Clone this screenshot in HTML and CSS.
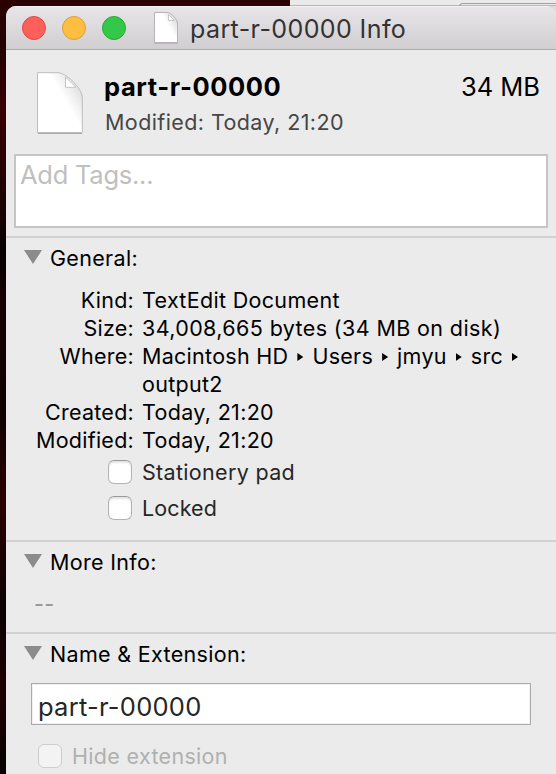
FILE: index.html
```html
<!DOCTYPE html>
<html lang="en">
<head>
<meta charset="utf-8">
<title>part-r-00000 Info</title>
<link rel="stylesheet" href="styles.css">
</head>
<body>
<svg class="defs" width="0" height="0">
  <defs>
    <linearGradient id="paper" x1=".52" y1=".34" x2=".8" y2=".12"><stop offset="0" stop-color="#fff"/><stop offset="1" stop-color="#e2e2e2"/></linearGradient>
  </defs>
</svg>
<div class="behind"><div class="behind-tab"></div></div>
<main class="window">
  <header class="titlebar">
    <div class="lights"><i class="light red"></i><i class="light yellow"></i><i class="light green"></i></div>
    <svg class="title-doc" viewBox="0 0 24 31"><path d="M.5.5H13C17 .5 23.500 7 23.500 12V30.500H.5Z" fill="url(#paper)" stroke="#b5b3b5"/><path d="M14.500 2.500V8.500H20.500Z" fill="#fff" stroke="#bdbdbd" stroke-width=".8"/></svg>
    <span class="title">part-r-00000 Info</span>
  </header>
  <section class="summary">
    <svg class="big-doc" viewBox="0 0 48 63"><path d="M2 61.500H46" stroke="#aaa" stroke-width="1"/><path d="M1.500.7H22C30 .7 46.300 16 46.300 26V60.500H1.500Z" fill="url(#paper)" stroke="#bdbdbd" stroke-width="1"/><path d="M29.500 5V15.300H40Z" fill="#fff" stroke="#c4c4c4" stroke-width="1"/></svg>
    <div class="summary-text">
      <div class="summary-line"><b class="name">part-r-00000</b><span class="size">34 MB</span></div>
      <div class="modified">Modified: Today, 21:20</div>
    </div>
  </section>
  <div class="tags">Add Tags...</div>
  <section class="panel general">
    <h2><svg class="tri" viewBox="0 0 18 14"><path d="M0 0H18L9 14Z"/></svg><span>General:</span></h2>
    <dl>
      <dt>Kind:</dt><dd>TextEdit Document</dd>
      <dt>Size:</dt><dd class="bytes">34,008,665 bytes (34 MB on disk)</dd>
      <dt>Where:</dt><dd class="where"><span>Macintosh HD</span><i class="arrow"></i><span>Users</span><i class="arrow"></i><span>jmyu</span><i class="arrow"></i><span>src</span><i class="arrow"></i><span class="break">output2</span></dd>
      <dt>Created:</dt><dd>Today, 21:20</dd>
      <dt>Modified:</dt><dd>Today, 21:20</dd>
    </dl>
    <div class="check"><i class="box"></i><span>Stationery pad</span></div>
    <div class="check"><i class="box"></i><span class="locked">Locked</span></div>
  </section>
  <section class="panel more">
    <h2><svg class="tri" viewBox="0 0 18 14"><path d="M0 0H18L9 14Z"/></svg><span>More Info:</span></h2>
    <div class="none">--</div>
  </section>
  <section class="panel extension">
    <h2><svg class="tri" viewBox="0 0 18 14"><path d="M0 0H18L9 14Z"/></svg><span>Name &amp; Extension:</span></h2>
    <div class="field">part-r-00000</div>
    <div class="check disabled"><i class="box"></i><span>Hide extension</span></div>
  </section>
</main>
</body>
</html>
```

FILE: styles.css
```css
* { box-sizing: border-box; }
body {
  margin: 0;
  width: 556px;
  height: 774px;
  overflow: hidden;
  background: linear-gradient(#2c0000 0, #240000 50px, #380000 110px, #1a0000 210px, #080000 250px, #160000 300px, #100000 420px, #2b0000 500px, #0c0000 610px, #200000 690px, #080000 774px);
  font-family: Inter, "Liberation Sans", sans-serif;
  font-size: 21.5px;
  line-height: 28px;
  letter-spacing: .32px;
  color: #000;
}
.defs { position: absolute; }
.behind { margin: 0 0 -24px 290px; height: 30px; background: linear-gradient(#eaeaea 5px, #b8b8b8 5px, #b8b8b8 6px, #dcdcdc 6px); overflow: hidden; }
.behind-tab { margin: 3px 0 0 169px; height: 27px; border: 1px solid #a0a0a0; border-right: 0; border-radius: 4px 0 0 0; }
.window { position: relative; margin-left: 6px; width: 550px; height: 768px; background: #ebebeb; border-radius: 10px 10px 0 0; overflow: hidden; }

.titlebar { height: 44px; display: flex; align-items: center; padding-left: 16px; background: linear-gradient(#e8e5e8, #d1ced1); border-top: 1px solid #f3f1f3; border-bottom: 1px solid #acaaac; }
.lights { display: flex; gap: 16px; width: 104px; }
.light { width: 24px; height: 24px; border-radius: 50%; border: 1px solid; }
.red { background: #fd605b; border-color: #df4845; }
.yellow { background: #fdbe41; border-color: #dd9f35; }
.green { background: #34c84a; border-color: #26a934; }
.title-doc { width: 24px; height: 31px; margin: -1px 0 0 28px; filter: drop-shadow(0 1px 0 #b8b6b8); }
.title { margin: 1px 0 0 12px; font-size: 25px; color: #333; white-space: nowrap; letter-spacing: .4px; }

.summary { height: 104px; display: flex; padding: 22px 16px 0 30px; }
.big-doc { width: 48px; height: 63px; flex: none; }
.summary-text { flex: 1; padding-left: 20px; }
.summary-line { display: flex; justify-content: space-between; margin-top: 1px; height: 28px; font-size: 25.5px; letter-spacing: 0; }
.name { letter-spacing: .6px; }
.modified { margin: 7px 0 0 1px; color: #464646; letter-spacing: .41px; }

.tags { margin: 0 8px 8px; height: 74px; border: 2px solid #c5c5c5; background: #fff; color: #bfbfbf; font-size: 25.5px; letter-spacing: -.25px; padding: 5px 4px; }

.panel { border-top: 2px solid #d2d2d2; }
h2 { margin: 0; height: 28px; display: flex; font-weight: 400; font-size: 21.5px; }
.tri { width: 18px; height: 14px; margin: 6px 8px 0 18px; fill: #8c8c8c; }
.general { height: 304px; padding-top: 6px; }
dl { margin: 14px 0 0; display: grid; grid-template-columns: 128px 1fr; column-gap: 8px; }
dt { text-align: right; letter-spacing: .25px; }
dd { margin: 0; white-space: nowrap; }
.bytes { letter-spacing: .38px; }
.where { display: flex; flex-wrap: wrap; align-items: center; letter-spacing: .28px; }
.break { flex-basis: 100%; }
.arrow { width: 6px; height: 8px; margin: 2px 9px 0; background: #000; clip-path: polygon(0 0, 100% 50%, 0 100%); }
.check { display: flex; align-items: center; height: 36px; padding-left: 102px; gap: 10px; color: #262626; }
.locked { letter-spacing: .1px; }
.box { width: 24px; height: 24px; background: #fff; border: 1px solid #b4b4b4; border-top-color: #999; border-radius: 6px; box-shadow: inset 0 2px 2px #e4e4e4; }
.more { height: 92px; padding-top: 6px; }
.none { margin: 14px 0 0 28px; color: #9a9a9a; font-weight: 500; }
.extension { height: 142px; padding-top: 6px; }
.field { margin: 15px 0 0 25px; width: 500px; height: 42px; border: 1px solid #ababab; background: #fff; box-shadow: inset 0 0 0 1px #f0f0f0; padding: 9px 6px; font-size: 25.5px; letter-spacing: .25px; color: #262626; }
.disabled { padding-left: 32px; margin-top: 13px; color: #b0b0b0; }
.disabled .box { background: #f3f3f3; border-color: #cdcdcd; box-shadow: none; }
```
